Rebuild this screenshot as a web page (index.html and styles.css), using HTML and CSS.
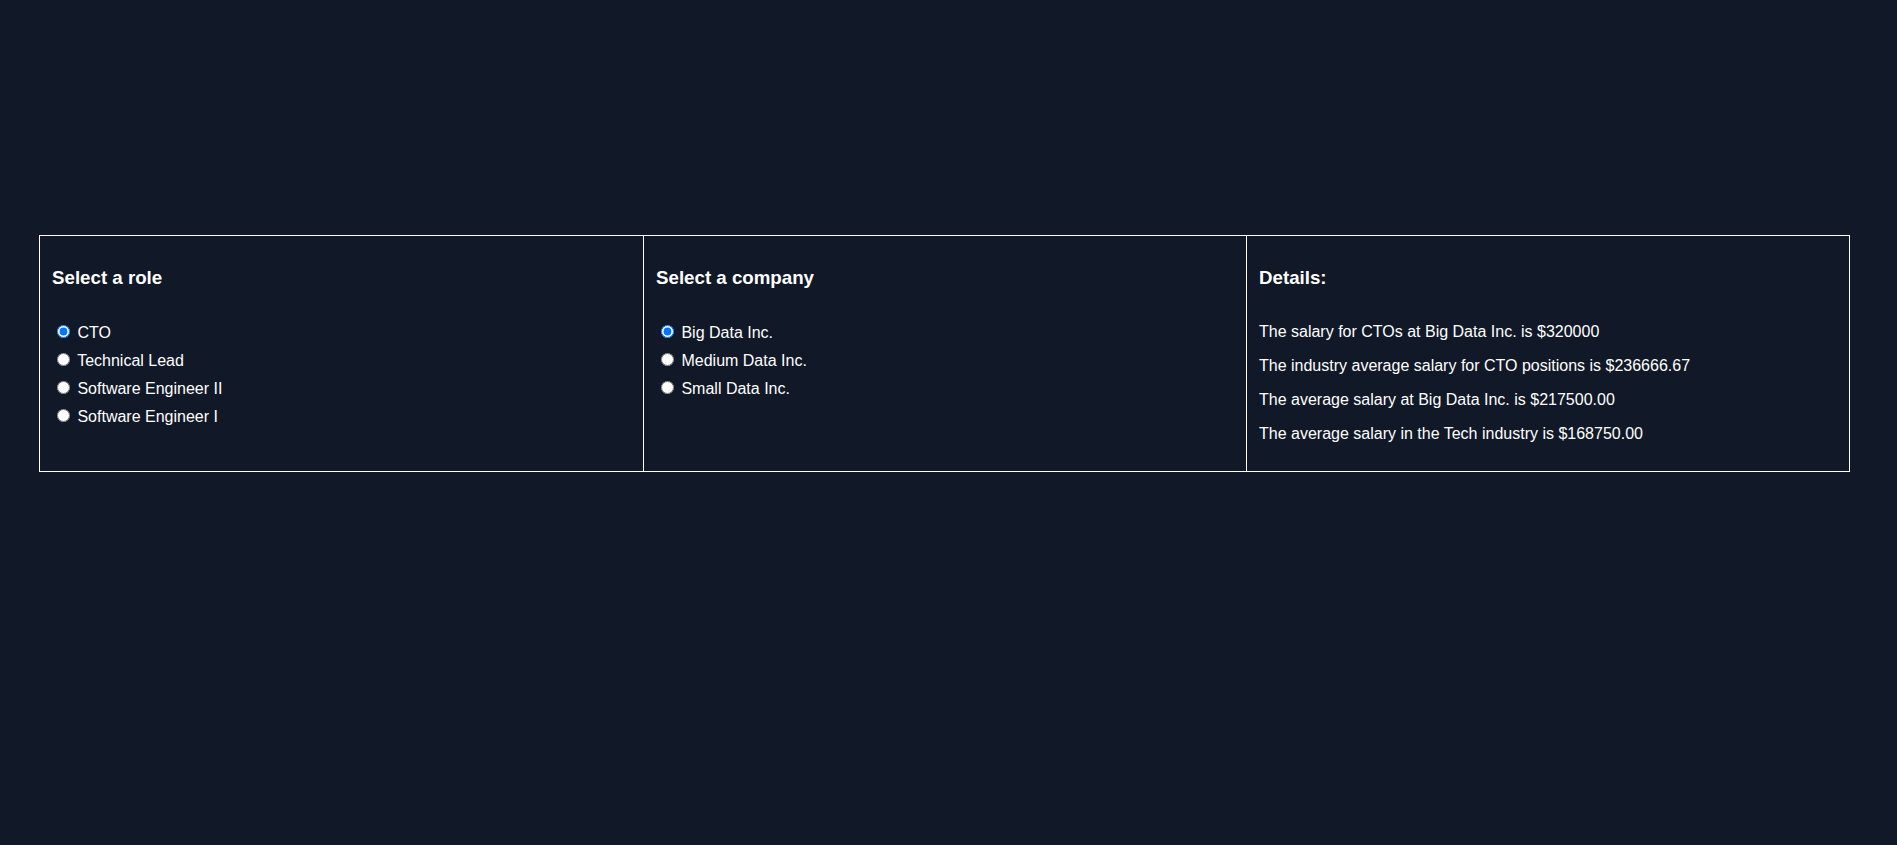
FILE: index.html
```html
<!DOCTYPE html>
<html lang="en">
<head>
<meta charset="utf-8">
<title>Salary Explorer</title>
<link rel="stylesheet" href="styles.css">
</head>
<body>
<main class="board">
  <section class="cell">
    <h3 class="cell-title">Select a role</h3>
    <div class="options">
      <label class="option"><input type="radio" name="role" checked> CTO</label>
      <label class="option"><input type="radio" name="role"> Technical Lead</label>
      <label class="option"><input type="radio" name="role"> Software Engineer II</label>
      <label class="option"><input type="radio" name="role"> Software Engineer I</label>
    </div>
  </section>
  <section class="cell">
    <h3 class="cell-title">Select a company</h3>
    <div class="options">
      <label class="option"><input type="radio" name="company" checked> Big Data Inc.</label>
      <label class="option"><input type="radio" name="company"> Medium Data Inc.</label>
      <label class="option"><input type="radio" name="company"> Small Data Inc.</label>
    </div>
  </section>
  <section class="cell">
    <h3 class="cell-title">Details:</h3>
    <div class="details">
      <p class="detail">The salary for CTOs at Big Data Inc. is $320000</p>
      <p class="detail">The industry average salary for CTO positions is $236666.67</p>
      <p class="detail">The average salary at Big Data Inc. is $217500.00</p>
      <p class="detail">The average salary in the Tech industry is $168750.00</p>
    </div>
  </section>
</main>
</body>
</html>
```
FILE: styles.css
```css
html, body {
  background: #111827;
}

body {
  margin: 0;
  padding-top: 235px;
  color: #ffffff;
  font-family: "Liberation Sans", Arial, sans-serif;
  font-size: 16px;
}

.board {
  margin: 0 0 0 39px;
  width: 1811px;
  box-sizing: border-box;
  border: 1px solid #ffffff;
  display: grid;
  grid-template-columns: 1fr 1fr 1fr;
}

.cell {
  display: flex;
  flex-direction: column;
  align-items: flex-start;
  padding: 12px;
}

.cell + .cell {
  border-left: 1px solid #ffffff;
}

.cell-title {
  font-size: 18.72px;
  font-weight: bold;
  margin: 18.72px 0;
}

.options {
  margin-top: 15px;
  display: flex;
  flex-direction: column;
  gap: 8px;
}

.option {
  display: block;
}

.option input {
  margin: 3px 3px 0 5px;
}

.details {
  display: flex;
  flex-direction: column;
}

.detail {
  margin: 16px 0;
}

.details .detail + .detail {
  margin-top: 0;
}
```
